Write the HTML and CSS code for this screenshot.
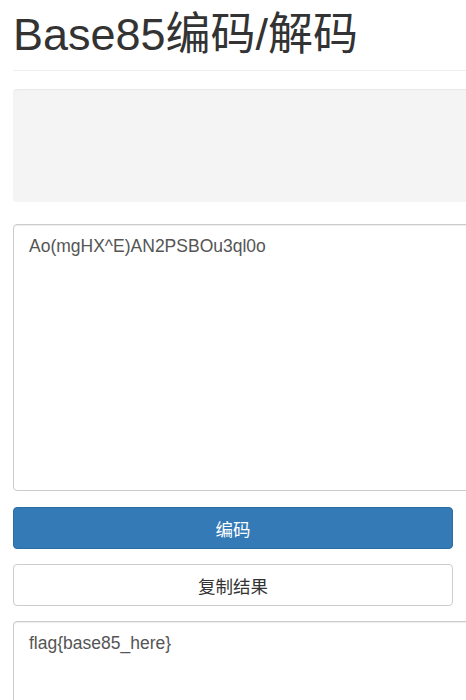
FILE: index.html
```html
<!DOCTYPE html>
<html lang="zh-CN">
<head>
  <meta charset="UTF-8" />
  <title>Base85编码/解码</title>
  <link rel="stylesheet" href="styles.css">
</head>
<body>
  <div class="container">
    <h1 class="page-title">Base85编码/解码</h1>
    <div class="well"></div>
    <textarea class="field field-input">Ao(mgHX^E)AN2PSBOu3ql0o</textarea>
    <button class="btn btn-primary">编码</button>
    <button class="btn btn-default">复制结果</button>
    <textarea class="field field-output">flag{base85_here}</textarea>
  </div>
</body>
</html>
```

FILE: styles.css
```css
* {
  box-sizing: border-box;
}
body {
  margin: 0;
  font-family: "Liberation Sans", "Noto Sans CJK SC", sans-serif;
  font-size: 16px;
  color: #333;
  background: #fff;
  overflow: hidden;
}
.container {
  width: 453px;
  padding-left: 13px;
}
.page-title {
  margin: 0;
  padding: 9px 0 9px;
  font-size: 45px;
  font-weight: 400;
  line-height: 52px;
  color: #333;
  border-bottom: 1px solid #eee;
  width: 470px;
}
.well {
  width: 470px;
  height: 113px;
  margin-top: 18px;
  background: #f4f4f4;
  border-radius: 4px;
  box-shadow: inset 0 1px 1px rgba(0,0,0,0.05);
}
.field {
  display: block;
  width: 470px;
  padding: 11px 15px;
  font-family: inherit;
  font-size: 17.5px;
  line-height: 20px;
  color: #555;
  border: 1px solid #ccc;
  border-radius: 4px;
  box-shadow: inset 0 1px 1px rgba(0,0,0,0.075);
  resize: none;
  margin: 0;
}
.field-input {
  height: 267px;
  margin-top: 22px;
}
.field-output {
  height: 120px;
  margin-top: 15px;
}
.btn {
  display: block;
  width: 100%;
  height: 42px;
  margin-top: 15px;
  font-family: inherit;
  font-size: 17.5px;
  border-radius: 4px;
  cursor: pointer;
}
.btn-primary {
  margin-top: 16px;
  color: #fff;
  background: #337ab7;
  border: 1px solid #2e6da4;
}
.btn-default {
  color: #333;
  background: #fff;
  border: 1px solid #ccc;
}
```
